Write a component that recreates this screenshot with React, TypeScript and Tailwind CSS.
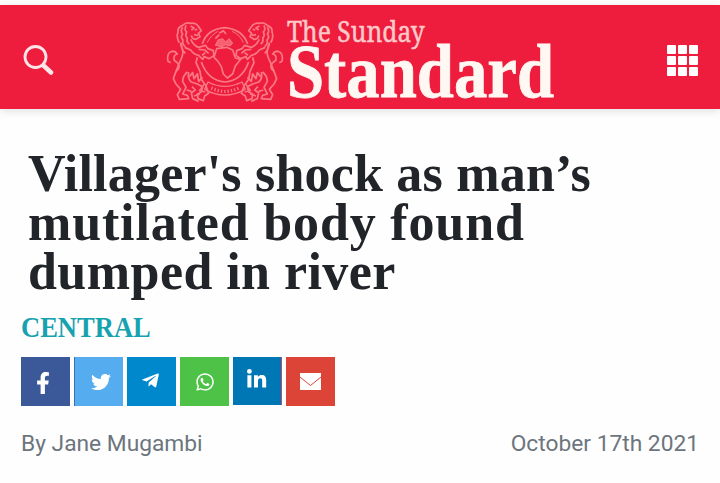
import { FaFacebookF, FaTelegramPlane, FaTwitter, FaWhatsapp } from "react-icons/fa"

function Lion() {
  return (
    <g>
      <path d="M88 128 Q78 112 84 96 Q82 82 98 76 Q108 66 122 70 Q138 68 146 80 L154 92 L145 100 L150 110 L138 118 Q126 118 124 106" />
      <path d="M98 82 Q90 94 98 102 Q90 112 99 120 Q95 132 106 140 M108 76 Q102 90 110 96 Q104 108 112 114 Q108 126 118 132 M122 78 l10 6 l-8 6 M134 90 l8 -2 M132 104 l12 2" />
      <path d="M122 118 Q132 138 146 142 L166 136 L174 146 L190 152 L192 166 L178 176 L162 170 L158 178 L146 166 Q132 164 122 150 L104 142" />
      <path d="M146 148 l18 2 l12 10 M166 158 l-10 8 M92 128 Q94 150 106 160" />
      <path d="M92 130 Q104 156 94 176 Q84 198 78 214 L70 236 L78 252 L92 268 L82 284 L88 298 L116 296 L112 286 L98 282 L108 262 L98 244 Q98 228 112 216" />
      <path d="M78 214 Q92 204 84 190 L72 180 Q70 164 82 162 Q72 148 58 158 Q50 168 54 184 L62 188" />
      <path d="M116 216 Q112 236 124 246 L142 252 L158 260 L154 276 L142 282 L144 296 L160 302 L164 288 L176 280 L168 258 L154 238 L150 214 L138 188 L142 172" />
      <path d="M118 230 l10 -12 l4 18 l10 -14 l4 22 l12 -12 M126 260 l10 10 l-12 8 l4 18 l18 8 M110 270 l14 4 M132 288 l18 -6" />
    </g>
  )
}

function Crest() {
  return (
    <svg viewBox="45 60 360 252" className="h-[84px] w-[120px] shrink-0" fill="none" stroke="#fb7884" strokeWidth="5.2" strokeLinejoin="round">
      <Lion />
      <g transform="translate(450 0) scale(-1 1)">
        <Lion />
      </g>
      <path d="M157 132 Q170 88 224 83 Q278 88 293 132 M154 186 Q174 242 225 246 Q276 242 296 186" />
      <path d="M171 128 Q184 104 204 94 M246 94 Q270 104 280 128" strokeWidth="3" />
      <path d="M196 136 l8 -16 l14 -4 l8 10 l12 -10 l10 14 l-8 8 l-14 -4 l-10 6 z" fill="#f8606f" strokeWidth="3" />
      <path d="M208 100 l12 -8 l8 10 M196 116 l12 -12" />
      <path d="M200 146 L230 142 L248 150 L256 174 L272 178 L256 198 L248 222 L232 234 L220 222 L214 200 L204 184 L192 172 Z" strokeWidth="5" />
      <path d="M174 246 Q224 272 276 246 L286 268 Q224 302 164 268 Z M164 250 l-16 22 l18 4 M286 250 l16 22 l-18 4" strokeWidth="4" />
      <path d="M184 264 Q225 284 266 264" strokeWidth="10" strokeDasharray="4 6" />
    </svg>
  )
}

function Wordmark() {
  return (
    <svg viewBox="0 0 270 96" className="h-24 w-[270px] shrink-0 overflow-visible">
      <text transform="translate(2 30) scale(.9 1)" textLength="153" lengthAdjust="spacingAndGlyphs" fontFamily="Noto Serif, Liberation Serif, serif" fontSize="30" fill="#ffc9c9" stroke="#ffc9c9" strokeWidth=".5">
        The Sunday
      </text>
      <text x="2" y="85" textLength="267" lengthAdjust="spacingAndGlyphs" fontFamily="Liberation Serif, serif" fontWeight="700" fontSize="76" fill="#fff7f2" stroke="#fff7f2" strokeWidth=".8">
        Standard
      </text>
    </svg>
  )
}

function SearchIcon() {
  return (
    <svg viewBox="0 0 32 32" className="size-8" fill="none" stroke="#ffe5e8">
      <circle cx="13.5" cy="13" r="10.5" strokeWidth="2.8" />
      <path d="M21.5 21.5 L29 28.5" strokeWidth="4.5" strokeLinecap="round" />
    </svg>
  )
}

function Envelope() {
  return (
    <svg viewBox="0 0 21 17" className="h-[17px] w-[21px]">
      <path d="M0 0H21V17H0Z" fill="#fff" />
      <path d="M0 4 L10.5 12.5 L21 4" fill="none" stroke="#dc4437" strokeWidth="1" />
    </svg>
  )
}

function LinkedinMark() {
  return (
    <svg viewBox="0 0 20 19" className="h-[19px] w-5 -translate-y-[3px]" fill="#fff">
      <circle cx="2.4" cy="2.4" r="2.4" />
      <path d="M.4 6.3H4.4V18.5H.4ZM7 6.3H10.9V8C12 6.5 13.2 6 14.8 6C18 6 19.2 8 19.2 11.2V18.5H15.2V12C15.2 10.3 14.8 9.3 13.3 9.3C11.7 9.3 11 10.5 11 12V18.5H7Z" />
    </svg>
  )
}

const shares = [
  { name: "Facebook", className: "h-[49px] bg-[#3b5998]", icon: <FaFacebookF size={22} className="-translate-x-[3px] translate-y-px" /> },
  { name: "Twitter", className: "h-[49px] bg-[#55acee] border-l border-[#3f6fae]", icon: <FaTwitter size={20} className="translate-x-0.5" /> },
  { name: "Telegram", className: "h-[49px] bg-[#0088cc]", icon: <FaTelegramPlane size={19} className="-translate-x-px -translate-y-px" /> },
  { name: "WhatsApp", className: "h-[49px] bg-[#4dc247]", icon: <FaWhatsapp size={20} /> },
  { name: "LinkedIn", className: "h-12 bg-[#0077b5] border-r border-[#b65069]", icon: <LinkedinMark /> },
  { name: "Email", className: "h-[49px] bg-[#dc4437]", icon: <Envelope /> },
]

const headline = [
  { text: "Villager's shock as man’s", className: "tracking-[0.2px]" },
  { text: "mutilated body found", className: "tracking-[0.85px]" },
  { text: "dumped in river", className: "tracking-[0.45px]" },
]

export default function App() {
  return (
    <div className="h-[483px] w-[720px] overflow-hidden bg-[#fefefe] pt-[5px] font-['Roboto',sans-serif]">
      <header className="flex h-[104px] items-start bg-[#ee1c3d] px-[22px] shadow-[0_2px_9px_rgba(0,0,0,0.12)]">
        <button aria-label="Search" className="mt-[39px] shrink-0">
          <SearchIcon />
        </button>
        <div className="ml-[111px] flex">
          <div className="mt-[15px]"><Crest /></div>
          <div className="mt-[7px]"><Wordmark /></div>
        </div>
        <button aria-label="Menu" className="ml-auto mt-[40px] grid grid-cols-3 gap-[2px]">
          {Array.from({ length: 9 }, (_, i) => (
            <span key={i} className="size-[9px] rounded-[1px] bg-white" />
          ))}
        </button>
      </header>

      <main className="px-[21px]">
        <h1 className="ml-[7px] mt-10 font-['Liberation_Serif',serif] text-[52px] font-bold leading-[49px] text-[#212529]">
          {headline.map((line) => (
            <span key={line.text} className={`block whitespace-nowrap ${line.className}`}>{line.text}</span>
          ))}
        </h1>
        <p className="mt-4 h-[30px] w-fit origin-left scale-x-[0.915] font-['Liberation_Serif',serif] text-[29px] font-bold leading-[30px] text-[#17a2b0]">CENTRAL</p>

        <div className="mt-[15px] flex h-[49px] gap-1 text-white">
          {shares.map((s) => (
            <a key={s.name} aria-label={s.name} className={`flex w-[49px] items-center justify-center ${s.className}`}>
              {s.icon}
            </a>
          ))}
        </div>

        <div className="mt-[23px] flex justify-between text-[22.75px] leading-[30px] text-[#6c757d]">
          <span>By Jane Mugambi</span>
          <span>October 17th 2021</span>
        </div>
      </main>
    </div>
  )
}
